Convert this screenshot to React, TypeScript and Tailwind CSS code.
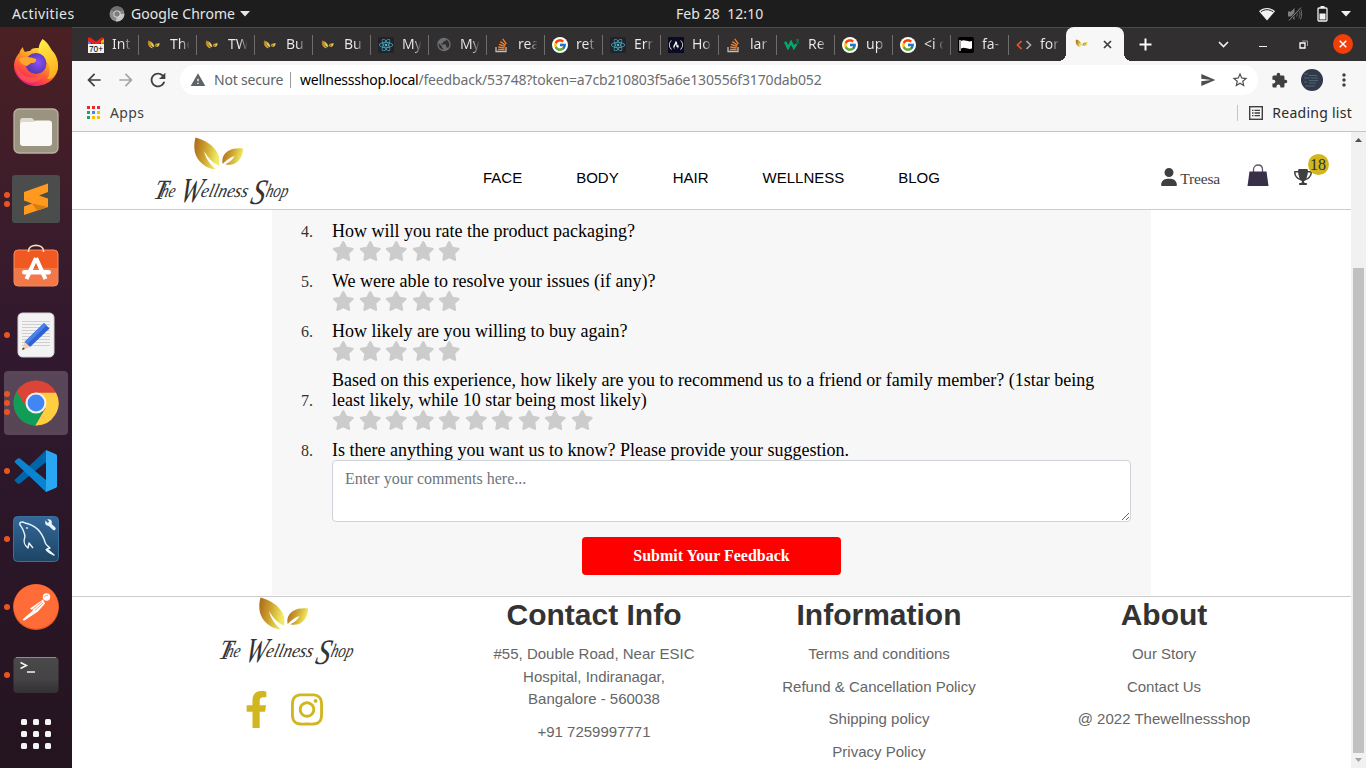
import type { ReactNode } from "react";
import { FaFacebookF, FaInstagram, FaStar, FaStackOverflow, FaReact } from "react-icons/fa";
import { FaUser, FaTrophy, FaFreeCodeCamp } from "react-icons/fa6";
import { MdExtension, MdSend, MdStarBorder, MdMoreVert, MdArrowBack, MdArrowForward, MdRefresh, MdWarning, MdPublic } from "react-icons/md";
import { FcGoogle } from "react-icons/fc";

/* ---------- shared art ---------- */

function LeafArt({ id }: { id: string }) {
  return (
    <>
      <defs>
        <linearGradient id={id + "a"} x1="0" x2="1" y1="0" y2="0.25">
          <stop offset="0" stopColor="#a9661c" />
          <stop offset="0.5" stopColor="#cda12e" />
          <stop offset="1" stopColor="#f0ea62" />
        </linearGradient>
      </defs>
      <path
        d="M43.500 0.500C52 2.500 62 8 66 17c1.500 3.500 1.500 7.500 1 11.500C61.500 26.500 56 21 52 14c1.500 7 6 13.500 12 18.300-8.500-.3-16.500-5.800-20-13.800-2.300-5.500-2-12.500-.5-18z"
        fill={`url(#${id}a)`}
      />
      <path
        d="M91 11.500c0 6-2.500 12-8 15-3.500 1.500-7 1.500-9.800.7C77.500 25.500 80.500 22.800 82.500 19c-4.500 1.500-8.500 4.300-11.800 8C69.500 21.500 71.500 17 76 14c4.500-2.700 9.500-3 15-2.500z"
        fill={`url(#${id}a)`}
      />
    </>
  );
}

function ShopLogo({ id }: { id: string }) {
  return (
    <svg width="136" height="70" viewBox="0 0 136 70" className="block shrink-0 overflow-visible">
      <LeafArt id={id} />
      <g
        fontFamily="'Liberation Serif', serif"
        fontStyle="italic"
        fill="#333"
        transform="translate(-4 60) skewX(-14)"
      >
        <text x="5" y="2" fontSize="28" textLength="13" lengthAdjust="spacingAndGlyphs">T</text>
        <text x="12" y="0" fontSize="19" textLength="14" lengthAdjust="spacingAndGlyphs">he</text>
        <text x="32" y="5" fontSize="35" textLength="21" lengthAdjust="spacingAndGlyphs">W</text>
        <text x="52" y="0" fontSize="19" textLength="47" lengthAdjust="spacingAndGlyphs">ellness</text>
        <text x="103" y="7" fontSize="36" textLength="14" lengthAdjust="spacingAndGlyphs">S</text>
        <text x="117" y="0" fontSize="19" textLength="22" lengthAdjust="spacingAndGlyphs">hop</text>
      </g>
    </svg>
  );
}

function LeafFavicon({ id }: { id: string }) {
  return (
    <svg width="16" height="16" viewBox="35 -14 66 66" className="block">
      <LeafArt id={id} />
    </svg>
  );
}

/* ---------- system bar ---------- */

function TopBar() {
  return (
    <div className="flex h-[27px] shrink-0 items-center bg-[#1d1d1d] text-[14px] text-[#e6e6e6]">
      <div className="flex w-[560px] items-center pl-3">
        <span className="w-[97px] tracking-[0.420px]">Activities</span>
        <svg width="16" height="16" viewBox="0 0 16 16" className="mr-[6px]">
          <circle cx="8" cy="8" r="7.500" fill="#8a8a8a" />
          <path d="M8 8H15.400A7.500 7.500 0 0 1 7 15.400z" fill="#c4c4c4" />
          <path d="M8 8L1.500 4A7.500 7.500 0 0 1 15 5H8z" fill="#707070" />
          <circle cx="8" cy="8" r="3.600" fill="#e0e0e0" />
          <circle cx="8" cy="8" r="2.700" fill="#7d7d7d" />
        </svg>
        <span className="tracking-[0.050px]">Google Chrome</span>
        <svg width="10" height="6" viewBox="0 0 10 6" className="ml-[5px]">
          <path d="M0 0h10L5 5.500z" fill="#e6e6e6" />
        </svg>
      </div>
      <div className="flex-1 pl-[116px] tracking-[0.060px] whitespace-pre">Feb 28  12:10</div>
      <div className="flex items-center pr-[15px]">
        <svg width="16" height="14" viewBox="0 0 16 14" className="mr-[12px]">
          <path d="M0 4.200C4.500 0 11.500 0 16 4.200L8 13.500z" fill="#f2f2f2" />
          <path d="M1.800 4.800C6 2 10 2 14.200 4.800" fill="none" stroke="#1d1d1d" strokeWidth="1" />
        </svg>
        <svg width="16" height="16" viewBox="0 0 16 16" className="mr-[14px]">
          <path d="M1 5.500h3L7.500 2v12L4 10.500H1z" fill="#7e7e7e" />
          <path d="M9.500 5.500c1 1.500 1 3.500 0 5M11.500 3.800c2 2.500 2 6 0 8.500M13.500 2.500c1.600 3.500 1.600 7.500 0 11" fill="none" stroke="#6c6c6c" />
          <path d="M2 14.500L14 1.500" stroke="#1d1d1d" strokeWidth="2.400" />
          <path d="M2 14.500L14 1.500" stroke="#8a8a8a" strokeWidth="1" />
        </svg>
        <svg width="11" height="16" viewBox="0 0 11 16" className="mr-[13px]">
          <path d="M3.500 0h4v2h-4z" fill="#f2f2f2" />
          <rect x="1" y="2" width="9" height="13" rx="1" fill="none" stroke="#f2f2f2" strokeWidth="1.300" />
          <rect x="2.500" y="7.500" width="6" height="6" fill="#f2f2f2" />
        </svg>
        <svg width="10" height="6" viewBox="0 0 10 6">
          <path d="M0 0h10L5 5.500z" fill="#f2f2f2" />
        </svg>
      </div>
    </div>
  );
}

/* ---------- dock ---------- */

function DockCell({ dots = 0, active = false, children }: { dots?: number; active?: boolean; children: ReactNode }) {
  return (
    <div className="relative flex h-[68px] shrink-0 items-center justify-center">
      {active && <div className="absolute inset-x-1 top-[2px] h-16 rounded-[4px] bg-white/20" />}
      <div className="absolute top-0 left-1 flex h-full flex-col items-center justify-center gap-[3px]">
        {Array.from({ length: dots }, (_, i) => (
          <span key={i} className="size-[6px] rounded-full bg-[#e95420]" />
        ))}
      </div>
      <div className="relative">{children}</div>
    </div>
  );
}

function Firefox() {
  return (
    <svg width="48" height="48" viewBox="0 0 48 48" className="mb-[2px] block">
      <defs>
        <linearGradient id="ffBody" x1="0.85" y1="0.05" x2="0.3" y2="1">
          <stop offset="0" stopColor="#fff44f" />
          <stop offset="0.35" stopColor="#ffa425" />
          <stop offset="0.7" stopColor="#ff4f3a" />
          <stop offset="1" stopColor="#e31587" />
        </linearGradient>
        <radialGradient id="ffGlobe" cx="0.6" cy="0.45">
          <stop offset="0" stopColor="#8b4fff" />
          <stop offset="1" stopColor="#5a3bb5" />
        </radialGradient>
        <linearGradient id="ffFlame" x1="0" y1="0" x2="0.3" y2="1">
          <stop offset="0" stopColor="#fff24a" />
          <stop offset="1" stopColor="#ffb11f" />
        </linearGradient>
      </defs>
      <path d="M7 18c0-5 3-8 4-9 0 2 1 4 2 5 2-1 4-1 5-1 3-4 8-3 11-2l7 1c6 4 10 10 10 16 0 11-10 20-22 20S2 38 2 28c0-6 3-10 5-13z" fill="url(#ffBody)" />
      <path d="M30.500 1c6 4 7 8 10 12 5 5 6.500 13 5 19-2 6-6 9-10 9 4-8 2-16-3-19-7-4-8-13-2-21z" fill="url(#ffFlame)" />
      <circle cx="24" cy="25.500" r="10.500" fill="url(#ffGlobe)" />
      <path d="M7 21c4-3 12-2 17 0 1 2-1 4-4 4-2 0-3 2-5 3-4-1-7-3-8-7z" fill="#ffa52c" />
      <path d="M4 28c4 11 17 15 28 9-3 6-11 9-17 7C8 42 4 35 4 28z" fill="#ff604a" opacity="0.6" />
    </svg>
  );
}

function Files() {
  return (
    <svg width="46" height="46" viewBox="0 0 46 46" className="block">
      <rect x="1" y="1" width="44" height="44" rx="5" fill="#9a937f" stroke="#b8b3a4" strokeWidth="1.300" />
      <path d="M7 13c0-2 1-3 3-3h9l4 4h13v8H7z" fill="#dfdace" />
      <path d="M7 17c0-2 1-3 3-3h10l3-1.500h13c2 0 3 1 3 3V35c0 2-1 3-3 3H10c-2 0-3-1-3-3z" fill="#faf9f7" />
    </svg>
  );
}

function Sublime() {
  return (
    <svg width="48" height="48" viewBox="0 0 48 48" className="block">
      <rect width="48" height="48" rx="3" fill="#4b4c4c" />
      <path d="M12 17L36 8.500V17L27 20.500l9 3V32L12 40v-8.500l8-3-8-3z" fill="#ff9a1f" />
      <path d="M20 28.500l16 3.500-11 3.500z" fill="#d97c12" />
    </svg>
  );
}

function Software() {
  return (
    <svg width="46" height="46" viewBox="0 0 46 46" className="mb-[5px] block">
      <rect x="1" y="8" width="44" height="36" rx="4" fill="#f05a22" stroke="#f88c60" />
      <path d="M1.500 26h43v14q0 3.500-3.500 3.500H5q-3.500 0-3.500-3.500z" fill="#fff" opacity="0.18" />
      <path d="M15.500 10V9c0-7.500 15-7.500 15 0v1" fill="none" stroke="#f6dfba" strokeWidth="1.600" />
      <path d="M23 16L13.500 37M23 16l9.500 21" stroke="#fff" strokeWidth="4.200" />
      <rect x="9" y="28" width="29" height="4.600" rx="2.300" fill="#fff" />
    </svg>
  );
}

function TextEditor() {
  return (
    <svg width="38" height="46" viewBox="0 0 38 46" className="block">
      <rect x="1" y="1" width="36" height="44" rx="4.500" fill="#f3f3f3" stroke="#d2d2d2" />
      <path d="M5 9.500h28M5 12.500h28M5 15.500h28M5 18.500h28M5 21.500h28M5 24.500h28M5 27.500h28M5 30.500h28M5 33.500h28" stroke="#cfcfcf" />
      <path d="M27 11l5.500 5.500L13 35l-5.500-5z" fill="#2f62d0" />
      <path d="M27 11l2.500 2.500L10 32.500 7.500 30z" fill="#4a80ea" />
      <path d="M7.500 30l5.500 5-8 3z" fill="#f1d2ad" />
      <path d="M6 35.500l2 1.600-3 .9z" fill="#333" />
    </svg>
  );
}

function Chrome() {
  return (
    <svg width="46" height="46" viewBox="0 0 46 46" className="block">
      <circle cx="23" cy="23" r="22.500" fill="#db4437" />
      <path d="M23 12.500H42.900A22.500 22.500 0 0 1 22 45.500L32.500 28z" fill="#ffcd40" />
      <path d="M3.700 11.500A22.500 22.500 0 0 0 22.300 45.500L32 28.500 14 28z" fill="#0f9d58" />
      <path d="M3.700 11.500L14 28l9-15.500h19.700A22.500 22.500 0 0 0 3.700 11.500z" fill="#db4437" />
      <circle cx="23" cy="23" r="10.500" fill="#f1f1f1" />
      <circle cx="23" cy="23" r="8.400" fill="#4285f4" />
    </svg>
  );
}

function VsCode() {
  return (
    <svg width="44" height="44" viewBox="0 0 44 44" className="block">
      <path d="M1 30.500L32 1v12L6 34.500c-1 .6-2 .4-3-.5l-2-2c-.6-.6-.6-1 0-1.500z" fill="#0065a9" />
      <path d="M1 13.500L32 43V31L6 9.500c-1-.6-2-.4-3 .5l-2 2c-.6.600-.6 1 0 1.500z" fill="#0a84d0" />
      <path d="M32 1l9.500 4c1 .5 1.500 1 1.500 2v30c0 1-.5 1.500-1.500 2L32 43z" fill="#2aa7f2" />
    </svg>
  );
}

function Workbench() {
  return (
    <svg width="46" height="46" viewBox="0 0 46 46" className="block">
      <defs>
        <linearGradient id="wb" x1="0" y1="0" x2="0" y2="1">
          <stop offset="0" stopColor="#33689a" />
          <stop offset="1" stopColor="#1d4464" />
        </linearGradient>
      </defs>
      <rect x="0.500" y="0.500" width="45" height="45" rx="4" fill="url(#wb)" stroke="#3b709c" />
      <path
        d="M7 9c-1-3 2-4 5-2 10 2 17 9 20 19 0 3 3 4 5 6l-3 1 7 6c-4-2-7-3-8-6M7 9c3 3 4 7 5 11-2 6-1 9 3 12l1-5 4 5"
        fill="none"
        stroke="#e9f3fa"
        strokeWidth="1.400"
        strokeLinejoin="round"
      />
      <circle cx="14" cy="12" r="0.900" fill="#e9f3fa" />
      <path d="M35 7l6 5.500" stroke="#e9f3fa" strokeWidth="3.400" strokeLinecap="round" />
      <circle cx="35.500" cy="6.500" r="3.300" fill="#e9f3fa" />
      <path d="M32 2.500l3.500 3.700" stroke="#33689a" strokeWidth="2" />
    </svg>
  );
}

function Postman() {
  return (
    <svg width="46" height="46" viewBox="0 0 46 46" className="mb-px block">
      <circle cx="23" cy="23" r="23" fill="#e5541f" />
      <circle cx="23" cy="22.500" r="22.300" fill="#ff6c37" />
      <circle cx="33.500" cy="13" r="3.700" fill="#fff" />
      <path d="M30 15.500L17 24.500l3 2L9.500 35.500l1.500 1.300L25 27.500l7-8z" fill="#fff" />
      <path d="M19 26l10-8.500M22 26.500l8-7.500M31 12.500l4-1.500" stroke="#ff6c37" strokeWidth="0.700" />
    </svg>
  );
}

function Terminal() {
  return (
    <svg width="46" height="38" viewBox="0 0 46 38" className="block">
      <defs>
        <linearGradient id="tm" x1="0" y1="0" x2="0" y2="1">
          <stop offset="0" stopColor="#4a4a4a" />
          <stop offset="0.600" stopColor="#454345" />
          <stop offset="1" stopColor="#333033" />
        </linearGradient>
      </defs>
      <rect x="0.500" y="1" width="45" height="36" rx="4" fill="url(#tm)" />
      <path d="M3 1.500h40" stroke="#8d8d8d" />
      <path d="M7.500 6.500l6 3-6 3" fill="none" stroke="#f4f4f4" strokeWidth="1.500" />
      <path d="M14 16h8" stroke="#f4f4f4" strokeWidth="1.500" />
    </svg>
  );
}

function Dock() {
  return (
    <nav className="flex w-[72px] shrink-0 flex-col overflow-hidden bg-linear-to-b from-[#4b2023] via-[#30182f] via-45% to-[#24141f] pt-[2px]">
      <DockCell><Firefox /></DockCell>
      <DockCell><Files /></DockCell>
      <DockCell dots={2}><Sublime /></DockCell>
      <DockCell><Software /></DockCell>
      <DockCell dots={1}><TextEditor /></DockCell>
      <DockCell dots={3} active><Chrome /></DockCell>
      <DockCell dots={1}><VsCode /></DockCell>
      <DockCell dots={1}><Workbench /></DockCell>
      <DockCell dots={1}><Postman /></DockCell>
      <DockCell dots={1}><Terminal /></DockCell>
      <div className="flex h-[50px] items-center justify-center">
        <div className="grid grid-cols-3 gap-[6px]">
          {Array.from({ length: 9 }, (_, i) => (
            <span key={i} className="size-[6px] rounded-[1.500px] bg-[#f4f4f4]" />
          ))}
        </div>
      </div>
    </nav>
  );
}

/* ---------- browser chrome ---------- */

function GmailIcon() {
  return (
    <svg width="16" height="16" viewBox="0 0 16 16" className="block">
      <path d="M0 2h3v6H0z" fill="#4285f4" />
      <path d="M13 2h3v6h-3z" fill="#34a853" />
      <path d="M0 1c1-1 2-1 3 0l5 3.500L13 1c1-1 2-1 3 0v3L8 9 0 4z" fill="#e5231b" />
      <path d="M13 4l3-2v3l-3 2z" fill="#fbbc04" />
      <rect y="7" width="16" height="9" fill="#f4f4f4" />
      <text x="8" y="15" textAnchor="middle" fontSize="9" textLength="14" lengthAdjust="spacingAndGlyphs" fontFamily="'Liberation Sans', sans-serif" fill="#000">
        70+
      </text>
    </svg>
  );
}

const googleIcon = (
  <span className="flex size-4 items-center justify-center rounded-full bg-white">
    <FcGoogle size={14} />
  </span>
);
const reactIcon = (
  <span className="flex size-4 items-center justify-center rounded-[2px] bg-[#20232a]">
    <FaReact size={14} color="#4fb9d3" />
  </span>
);
const stackIcon = (
  <svg width="16" height="16" viewBox="0 0 16 16" className="block">
    <path d="M2 10v4.500h10V10" fill="none" stroke="#bcbbbb" strokeWidth="1.300" />
    <path d="M4 12.500h6.500M4.200 10l6.400.8M4.900 7.300l6.100 2M6.300 4.600l5.200 3.600M8.700 1.800l3.700 5.200" stroke="#f47f24" strokeWidth="1.300" />
  </svg>
);

const tabs: { icon: ReactNode; title: string }[] = [
  { icon: <GmailIcon />, title: "Int" },
  { icon: <LeafFavicon id="f1" />, title: "The" },
  { icon: <LeafFavicon id="f2" />, title: "TW" },
  { icon: <LeafFavicon id="f3" />, title: "Bu" },
  { icon: <LeafFavicon id="f4" />, title: "Bu" },
  { icon: reactIcon, title: "My" },
  { icon: <MdPublic size={17} color="#6b6e72" />, title: "My" },
  { icon: stackIcon, title: "rea" },
  { icon: googleIcon, title: "ret" },
  { icon: reactIcon, title: "Err" },
  {
    icon: (
      <span className="flex size-4 items-center justify-center bg-[#0a0a23]">
        <FaFreeCodeCamp size={14} color="#fff" />
      </span>
    ),
    title: "Ho",
  },
  { icon: stackIcon, title: "lar" },
  {
    icon: (
      <svg width="17" height="16" viewBox="0 0 17 16">
        <path d="M1.200 4.500l3 6.500L7.500 5l3 6L13 7" fill="none" stroke="#04aa6d" strokeWidth="2.600" />
        <path d="M13 2.500h2.500L14 4.200c2 0 2 2.500-.8 2" fill="none" stroke="#04aa6d" strokeWidth="0.900" />
      </svg>
    ),
    title: "Re",
  },
  { icon: googleIcon, title: "up" },
  { icon: googleIcon, title: "<i c" },
  {
    icon: (
      <svg width="16" height="16" viewBox="0 0 16 16">
        <rect width="16" height="16" rx="2" fill="#000" />
        <path d="M2 3v11" stroke="#fff" strokeWidth="1.300" />
        <path d="M3 4c4-2 6 1.500 11 0v7.500c-5 1.500-7-2-11 0z" fill="#fff" />
      </svg>
    ),
    title: "fa-",
  },
  {
    icon: (
      <svg width="16" height="16" viewBox="0 0 16 16">
        <path d="M5.500 4L1.500 8l4 4" fill="none" stroke="#e8562a" strokeWidth="1.700" />
        <path d="M10.500 4l4 4-4 4" fill="none" stroke="#a9a9a9" strokeWidth="1.700" />
      </svg>
    ),
    title: "for",
  },
];

function TabStrip() {
  return (
    <div className="flex h-[34px] shrink-0 border-t border-[#4b494a] bg-[#312f30] pl-[8px]">
      {tabs.map((t, i) => (
        <div key={i} className="flex w-[58px] shrink-0 items-center pl-2">
          <span className="flex w-4 shrink-0 justify-center">{t.icon}</span>
          <span className="mb-[2px] ml-2 w-[19px] overflow-hidden bg-linear-to-r from-[#ececec] from-60% to-[#ececec]/10 bg-clip-text text-[14px] leading-5 whitespace-nowrap text-transparent">
            {t.title}
          </span>
          {i < tabs.length - 1 && <span className="-mr-px ml-[7px] h-5 w-px shrink-0 bg-[#6f6d6e]" />}
        </div>
      ))}
      <div className="relative -mt-px flex w-[58px] shrink-0 items-center rounded-t-[8px] bg-[#f7f7f7] pl-[8px] before:absolute before:bottom-0 before:-left-2 before:size-2 before:bg-[radial-gradient(circle_at_0_0,#312f30_8px,#f7f7f7_8px)] after:absolute after:-right-2 after:bottom-0 after:size-2 after:bg-[radial-gradient(circle_at_100%_0,#312f30_8px,#f7f7f7_8px)]">
        <LeafFavicon id="f5" />
        <svg width="9" height="9" viewBox="0 0 9 9" className="ml-[13px]">
          <path d="M1 1l7 7M8 1L1 8" stroke="#3d3d3d" strokeWidth="1.700" />
        </svg>
      </div>
      <div className="flex flex-1 items-center pb-px">
        <svg width="13" height="13" viewBox="0 0 13 13" className="ml-[15px]">
          <path d="M6.500 0.500v12M0.500 6.500h12" stroke="#fff" strokeWidth="2" />
        </svg>
        <svg width="11" height="7" viewBox="0 0 11 7" className="ml-[66px]">
          <path d="M1 1l4.500 4.500L10 1" fill="none" stroke="#f0f0f0" strokeWidth="1.700" />
        </svg>
        <span className="mt-[5px] ml-[30px] h-px w-2 bg-[#f0f0f0]" />
        <svg width="9" height="9" viewBox="0 0 9 9" className="ml-[32px]">
          <path d="M3 1h5.500v5" fill="none" stroke="#9c9c9c" />
          <path d="M1 3h5v5H1z" fill="none" stroke="#fff" strokeWidth="1.300" />
        </svg>
        <span className="ml-[25px] flex size-5 items-center justify-center rounded-full bg-[#f23f0a]">
          <svg width="8" height="8" viewBox="0 0 8 8">
            <path d="M0.700 0.700l6.600 6.600M7.300 0.700L0.700 7.300" stroke="#fff" strokeWidth="1.500" />
          </svg>
        </span>
      </div>
    </div>
  );
}

function Toolbar() {
  return (
    <div className="flex h-[38px] shrink-0 items-center bg-[#f7f7f7] text-[14px]">
      <MdArrowBack size={20} className="ml-3 text-[#3f3f3f]" />
      <MdArrowForward size={20} className="ml-3 text-[#a5a5a5]" />
      <MdRefresh size={22} className="ml-[11px] text-[#3f3f3f]" />
      <div className="ml-[11px] flex h-[30px] w-[1078px] items-center rounded-full bg-white pl-[10px]">
        <MdWarning size={16} className="text-[#5f6368]" />
        <span className="mb-[2px] ml-2 w-[76px] tracking-[-0.200px] text-[#5f6368]">Not secure</span>
        <span className="h-4 w-px bg-[#9a9c9f]" />
        <span className="mb-[2px] ml-[9px] flex-1 text-[#6b6e72]">
          <span className="tracking-[-0.230px] text-black">wellnessshop.local</span>
          <span className="tracking-[-0.160px]">/feedback/53748?token=a7cb210803f5a6e130556f3170dab052</span>
        </span>
        <MdSend size={16} className="text-[#4d4d4d]" />
        <MdStarBorder size={18} className="mr-[9px] ml-[15px] text-[#4d4d4d]" />
      </div>
      <MdExtension size={17} className="ml-[13px] text-[#3f3f3f]" />
      <svg width="22" height="22" viewBox="0 0 22 22" className="ml-[13px]">
        <circle cx="11" cy="11" r="11" fill="#303a49" />
        <path d="M3 5h4M8 6.500h8M3 9h6M10 9h7M8 11.500h9M3 13h3M8 14h7M4 17h10" stroke="#6d7f93" strokeWidth="0.600" />
      </svg>
      <MdMoreVert size={20} className="ml-[11px] text-[#3f3f3f]" />
    </div>
  );
}

const appDots = [
  "bg-[#ea2a2a]", "bg-[#ea2a2a]", "bg-[#ea2a2a]",
  "bg-[#1ea362]", "bg-[#4285f4]", "bg-[#fbbc04]",
  "bg-[#1ea362]", "bg-[#fbbc04]", "bg-[#fbbc04]",
];

function BookmarksBar() {
  return (
    <div className="flex h-[33px] shrink-0 items-center border-b border-[#c4c4c4] bg-[#f7f7f7] pt-0 pb-[5px] text-[14px] text-[#3f3f3f]">
      <div className="ml-[15px] grid grid-cols-3 gap-[2px]">
        {appDots.map((c, i) => (
          <span key={i} className={"size-[3px] " + c} />
        ))}
      </div>
      <span className="ml-[10px] flex-1 tracking-[0.400px]">Apps</span>
      <span className="h-4 w-px bg-[#c6c6c6]" />
      <svg width="14" height="14" viewBox="0 0 14 14" className="ml-[11px]">
        <rect x="0.700" y="0.700" width="12.600" height="12.600" fill="none" stroke="#3f3f3f" strokeWidth="1.400" />
        <path d="M3 4.300h1.500M3 7h1.500M3 9.700h1.500M5.500 4.300H11M5.500 7H11M5.500 9.700H11" stroke="#3f3f3f" strokeWidth="1.300" />
      </svg>
      <span className="mr-[14px] ml-[9px] tracking-[0.260px] text-[#2b2b2b]">Reading list</span>
    </div>
  );
}

/* ---------- page ---------- */

function SiteHeader() {
  return (
    <header className="flex h-[78px] shrink-0 items-start border-b border-[#ccc] bg-white">
      <div className="mt-[5px] ml-[80px]">
        <ShopLogo id="lg1" />
      </div>
      <nav className="mt-[35px] ml-[195px] flex gap-[54px] font-['Liberation_Sans',sans-serif] text-[15px] leading-[22px] text-black">
        <a>FACE</a>
        <a>BODY</a>
        <a>HAIR</a>
        <a>WELLNESS</a>
        <a>BLOG</a>
      </nav>
      <div className="ml-auto flex items-start pr-[22px] font-['Liberation_Serif',serif] text-[#3f3f3f]">
        <FaUser size={18} className="mt-[36px]" />
        <span className="mt-[37px] ml-[2px] text-[15.500px] leading-5 tracking-[-0.160px]">Treesa</span>
        <svg width="22" height="24" viewBox="0 0 22 24" className="mt-[31px] ml-[27px]">
          <path d="M6.500 9V6.500C6.500 0.500 15.500 0.500 15.500 6.500V9" fill="none" stroke="#5d566c" strokeWidth="1.300" />
          <path d="M2.500 8.500h17L21.500 23H0.500z" fill="#382f49" />
        </svg>
        <div className="relative mt-[36px] ml-[25px] w-[35px]">
          <FaTrophy size={18} />
          <span className="absolute -top-[14px] left-[14px] flex size-[21px] items-center justify-center rounded-full bg-[#d1b61f] pr-px text-[16px] text-[#2f2f2f]">
            18
          </span>
        </div>
      </div>
    </header>
  );
}

function Stars({ count }: { count: number }) {
  return (
    <div className="flex h-[20px] gap-[4px] text-[#ccc]">
      {Array.from({ length: count }, (_, i) => (
        <FaStar key={i} className="-mt-[0.500px] h-[20px] w-[22.500px] shrink-0" />
      ))}
    </div>
  );
}

function Question({ n, text, stars }: { n: number; text: string; stars: number }) {
  return (
    <div className="flex items-end">
      <span className="w-[60px] shrink-0 pb-[29px] pl-[29px] text-[16px] leading-5 text-[#333]">{n}.</span>
      <div className="flex flex-1 flex-col pb-[10px]">
        <span className="text-[18px] leading-5 text-black">{text}</span>
        <Stars count={stars} />
      </div>
    </div>
  );
}

function FeedbackForm() {
  return (
    <section className="ml-[200px] h-[385px] w-[879px] shrink-0 overflow-hidden bg-[#f7f7f7] pr-5 font-['Liberation_Serif',serif]">
      <div className="flex h-[11px] items-start pl-[60px]">
        <div className="-mt-[19.500px]">
          <Stars count={5} />
        </div>
      </div>
      <Question n={4} text="How will you rate the product packaging?" stars={5} />
      <Question n={5} text="We were able to resolve your issues (if any)?" stars={5} />
      <Question n={6} text="How likely are you willing to buy again?" stars={5} />
      <div className="-mt-px">
        <Question
          n={7}
          text="Based on this experience, how likely are you to recommend us to a friend or family member? (1star being least likely, while 10 star being most likely)"
          stars={10}
        />
      </div>
      <div className="flex">
        <span className="w-[60px] shrink-0 pl-[29px] text-[16px] leading-[22px] text-[#333]">8.</span>
        <div className="flex flex-1 flex-col">
          <span className="text-[18px] leading-5 text-black">
            Is there anything you want us to know? Please provide your suggestion.
          </span>
          <textarea
            className="block h-[62px] w-[799px] resize rounded-[4px] border border-[#ced4da] bg-white px-3 py-[6px] text-[16px] leading-6 placeholder:text-[#6c757d]"
            placeholder="Enter your comments here..."
          />
        </div>
      </div>
      <button className="mt-[15px] ml-[310px] block h-[38px] w-[259px] rounded-[4px] bg-[#ff0000] text-[16px] leading-6 font-bold text-white">
        Submit Your Feedback
      </button>
    </section>
  );
}

function FooterColumn({ title, children }: { title: string; children: ReactNode }) {
  return (
    <div className="flex w-[285px] flex-col items-center gap-[10px] text-center text-[15px] leading-[22.500px] text-[#666]">
      <h3 className="text-[30px] leading-9 font-bold text-[#333]">{title}</h3>
      {children}
    </div>
  );
}

function Footer() {
  return (
    <footer className="mt-[1px] flex flex-1 border-t border-[#ccc] bg-white pl-[94.500px] font-['Liberation_Sans',sans-serif]">
      <div className="flex w-[285px] flex-col items-start pl-[50.500px]">
        <ShopLogo id="lg2" />
        <div className="mt-[24px] ml-[29px] flex gap-[23px] text-[#d1b61f]">
          <FaFacebookF className="-ml-px h-[37px] w-[23px]" />
          <FaInstagram className="h-[37px] w-[32px]" />
        </div>
      </div>
      <FooterColumn title="Contact Info">
        <p>
          #55, Double Road, Near ESIC
          <br />
          Hospital, Indiranagar,
          <br />
          Bangalore - 560038
        </p>
        <p>+91 7259997771</p>
      </FooterColumn>
      <FooterColumn title="Information">
        <a>Terms and conditions</a>
        <a>Refund &amp; Cancellation Policy</a>
        <a>Shipping policy</a>
        <a>Privacy Policy</a>
      </FooterColumn>
      <FooterColumn title="About">
        <a>Our Story</a>
        <a>Contact Us</a>
        <a>@ 2022 Thewellnessshop</a>
      </FooterColumn>
    </footer>
  );
}

function Scrollbar() {
  return (
    <div className="flex w-[15px] shrink-0 flex-col items-center bg-[#f1f1f1]">
      <svg width="7" height="4" viewBox="0 0 7 4" className="mt-[6px] shrink-0">
        <path d="M0 4L3.500 0 7 4z" fill="#505050" />
      </svg>
      <div className="mt-[126px] h-[485px] w-[11px] shrink-0 bg-[#c1c1c1]" />
      <svg width="7" height="4" viewBox="0 0 7 4" className="mt-[5px] shrink-0">
        <path d="M0 0h7L3.500 4z" fill="#a3a3a3" />
      </svg>
    </div>
  );
}

export default function App() {
  return (
    <div className="flex h-[768px] w-[1366px] flex-col overflow-hidden bg-white font-['Noto_Sans',sans-serif]">
      <TopBar />
      <div className="flex min-h-0 flex-1">
        <Dock />
        <div className="flex min-w-0 flex-1 flex-col">
          <TabStrip />
          <Toolbar />
          <BookmarksBar />
          <div className="flex min-h-0 flex-1">
            <main className="flex w-[1279px] shrink-0 flex-col overflow-hidden">
              <SiteHeader />
              <FeedbackForm />
              <Footer />
            </main>
            <Scrollbar />
          </div>
        </div>
      </div>
    </div>
  );
}
